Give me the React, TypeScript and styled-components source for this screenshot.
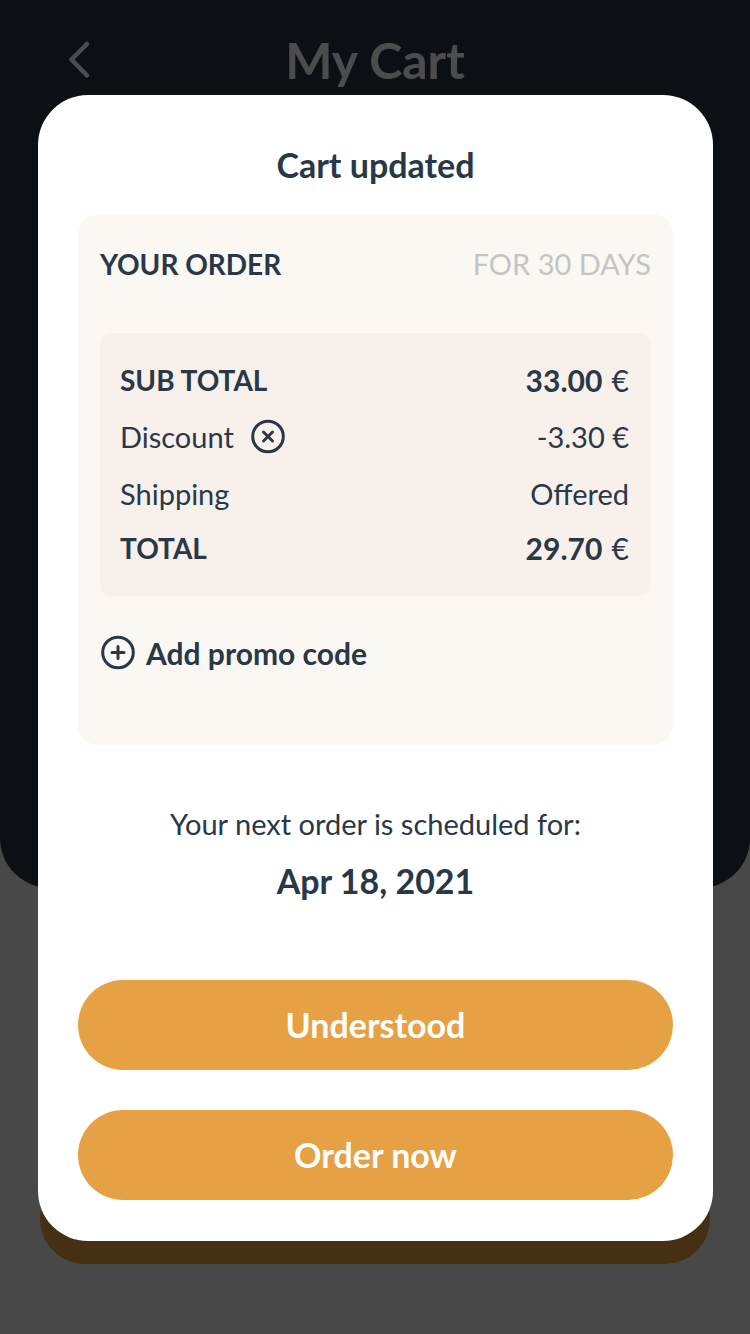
import React from "react";
import styled, { createGlobalStyle } from "styled-components";

const ink = "#283848";
const orange = "#e6a144";

const GlobalStyle = createGlobalStyle`
  *, *::before, *::after { box-sizing: border-box; }
  body {
    margin: 0;
    background: #f0f0f0;
    color: ${ink};
    font-family: Lato, "Liberation Sans", sans-serif;
  }
  button { font-family: inherit; border: 0; cursor: pointer; }
  h1, h2, h3, p { margin: 0; }
`;

const Screen = styled.div`
  position: relative;
  display: flex;
  flex-direction: column;
  min-height: 100vh;
`;

const CartHero = styled.header`
  flex: 1;
  padding: 30px 60px;
  background: ${ink};
  border-radius: 0 0 50px 50px;
`;

const TopBar = styled.div`
  display: grid;
  grid-template-columns: 40px 1fr 40px;
  align-items: center;
`;

const BackButton = styled.button`
  display: flex;
  align-items: center;
  height: 60px;
  padding: 0 0 0 8px;
  background: none;
  color: #fff;
`;

const PageTitle = styled.h1`
  color: #fff;
  font-size: 50px;
  line-height: 60px;
  font-weight: 700;
  text-align: center;
`;

const CartFooter = styled.footer`
  display: flex;
  padding: 286px 40px 70px;
`;

const PillButton = styled.button`
  width: 100%;
  height: 90px;
  padding: 0;
  border-radius: 45px;
  background: ${orange};
  color: #fff;
  font-size: 34px;
  line-height: 40px;
  font-weight: 700;
`;

const Overlay = styled.div`
  position: absolute;
  inset: 0;
  padding: 95px 37px 93px 38px;
  background: rgba(0, 0, 0, 0.7);
`;

const Dialog = styled.section`
  display: flex;
  flex-direction: column;
  padding: 50px 40px 41px;
  border-radius: 50px;
  background: #fff;
`;

const DialogTitle = styled.h2`
  margin-bottom: 29px;
  font-size: 34px;
  line-height: 40px;
  font-weight: 700;
  text-align: center;
`;

const OrderCard = styled.div`
  padding: 30px 22px 73px;
  border-radius: 20px;
  background: #fbf8f3;
`;

const CardHeader = styled.div`
  display: flex;
  justify-content: space-between;
  align-items: center;
  margin-bottom: 49px;
  line-height: 40px;
`;

const CardTitle = styled.h3`
  font-size: 28px;
  font-weight: 700;
`;

const Period = styled.span`
  color: #c4c4c4;
  font-size: 29px;
`;

const TotalsPanel = styled.div`
  padding: 20px 22px 21px 20px;
  border-radius: 10px;
  background: #f8f0ea;
`;

const Totals = styled.table`
  width: 100%;
  border-collapse: collapse;
`;

const TotalRow = styled.tr<{ $strong?: boolean; $tall?: boolean }>`
  height: ${({ $tall }) => ($tall ? 60 : 54)}px;
  line-height: 40px;

  th, td {
    padding: 0;
    font-weight: ${({ $strong }) => ($strong ? 700 : 400)};
  }
  th {
    font-size: ${({ $strong }) => ($strong ? 28 : 29)}px;
    text-align: left;
  }
  td {
    font-size: ${({ $strong }) => ($strong ? 30 : 29)}px;
    text-align: right;
  }
`;

const LabelGroup = styled.div`
  display: flex;
  align-items: center;
  gap: 16px;
`;

const Currency = styled.span`
  margin-left: 2px;
  font-weight: 400;
`;

const IconButton = styled.button`
  display: flex;
  padding: 0;
  background: none;
  color: inherit;
`;

const PromoButton = styled.button`
  display: flex;
  align-items: center;
  gap: 10px;
  margin-top: 38px;
  padding: 0;
  background: none;
  color: inherit;
  font-size: 30px;
  line-height: 38px;
  font-weight: 700;
`;

const Schedule = styled.div`
  padding: 59px 0 79px;
  text-align: center;
`;

const ScheduleLabel = styled.p`
  font-size: 29px;
  line-height: 40px;
`;

const ScheduleDate = styled.p`
  margin-top: 17px;
  font-size: 34px;
  line-height: 40px;
  font-weight: 700;
`;

const Actions = styled.div`
  display: flex;
  flex-direction: column;
  gap: 40px;
`;

function ChevronIcon() {
  return (
    <svg width="24" height="38" viewBox="0 0 24 38" fill="none" stroke="currentColor" strokeWidth="4.500" strokeLinecap="round" strokeLinejoin="round" aria-hidden="true">
      <path d="M19 3 L3.500 18.500 L19 34.500" />
    </svg>
  );
}

function CircleIcon({ path }: { path: string }) {
  return (
    <svg width="36" height="36" viewBox="0 0 36 36" fill="none" stroke="currentColor" strokeWidth="3" strokeLinecap="round" aria-hidden="true">
      <circle cx="18" cy="17.500" r="15.300" />
      <path d={path} />
    </svg>
  );
}

export default function App() {
  return (
    <>
      <GlobalStyle />
      <Screen>
        <CartHero>
          <TopBar>
            <BackButton aria-label="Back"><ChevronIcon /></BackButton>
            <PageTitle>My Cart</PageTitle>
          </TopBar>
        </CartHero>
        <CartFooter>
          <PillButton aria-label="Checkout" />
        </CartFooter>
        <Overlay>
          <Dialog role="dialog" aria-modal="true" aria-labelledby="dialog-title">
            <DialogTitle id="dialog-title">Cart updated</DialogTitle>
            <OrderCard>
              <CardHeader>
                <CardTitle>YOUR ORDER</CardTitle>
                <Period>FOR 30 DAYS</Period>
              </CardHeader>
              <TotalsPanel>
                <Totals>
                  <tbody>
                    <TotalRow $strong>
                      <th scope="row">SUB TOTAL</th>
                      <td>33.00 <Currency>€</Currency></td>
                    </TotalRow>
                    <TotalRow $tall>
                      <th scope="row">
                        <LabelGroup>
                          Discount
                          <IconButton aria-label="Remove discount">
                            <CircleIcon path="M13.500 13 L22.500 22 M22.500 13 L13.500 22" />
                          </IconButton>
                        </LabelGroup>
                      </th>
                      <td>-3.30 €</td>
                    </TotalRow>
                    <TotalRow>
                      <th scope="row">Shipping</th>
                      <td>Offered</td>
                    </TotalRow>
                    <TotalRow $strong>
                      <th scope="row">TOTAL</th>
                      <td>29.70 <Currency>€</Currency></td>
                    </TotalRow>
                  </tbody>
                </Totals>
              </TotalsPanel>
              <PromoButton>
                <CircleIcon path="M18 11.500 V23.500 M12 17.500 H24" />
                Add promo code
              </PromoButton>
            </OrderCard>
            <Schedule>
              <ScheduleLabel>Your next order is scheduled for:</ScheduleLabel>
              <ScheduleDate>Apr 18, 2021</ScheduleDate>
            </Schedule>
            <Actions>
              <PillButton>Understood</PillButton>
              <PillButton>Order now</PillButton>
            </Actions>
          </Dialog>
        </Overlay>
      </Screen>
    </>
  );
}
